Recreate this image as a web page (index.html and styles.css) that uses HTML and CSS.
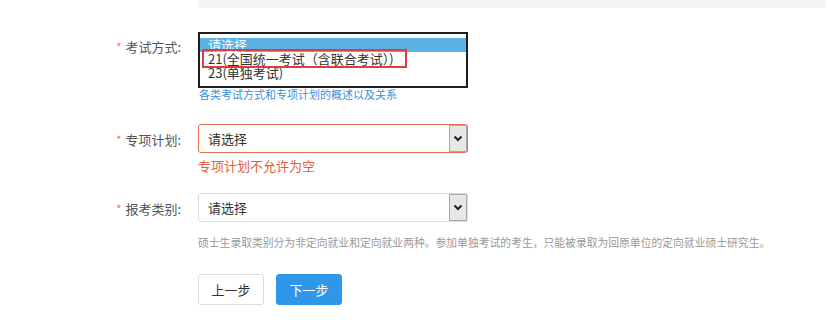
FILE: index.html
```html
<!DOCTYPE html>
<html lang="zh-CN">
<head>
    <meta charset="UTF-8">
    <title>报考信息</title>
    <link rel="stylesheet" href="styles.css">
</head>
<body>
<div class="topbar"></div>

<!-- 考试方式 -->
<div class="row row-mode">
    <div class="label"><span class="star">*</span>考试方式:</div>
    <div class="field">
        <div class="listbox">
            <div class="opt opt-on">请选择</div>
            <div class="opt">21(全国统一考试（含联合考试）)</div>
            <div class="opt">23(单独考试)</div>
            <div class="mark"></div>
        </div>
        <a class="link" href="#">各类考试方式和专项计划的概述以及关系</a>
    </div>
</div>

<!-- 专项计划 -->
<div class="row row-plan">
    <div class="label"><span class="star">*</span>专项计划:</div>
    <div class="field">
        <div class="select select-err">
            <span class="select-text">请选择</span>
            <span class="arrow">
                <svg width="10" height="7" viewBox="0 0 10 7"><path d="M1.5 1.5 L5 5 L8.5 1.5" fill="none" stroke="#222" stroke-width="2"/></svg>
            </span>
        </div>
        <div class="error">专项计划不允许为空</div>
    </div>
</div>

<!-- 报考类别 -->
<div class="row row-type">
    <div class="label"><span class="star">*</span>报考类别:</div>
    <div class="field">
        <div class="select">
            <span class="select-text">请选择</span>
            <span class="arrow">
                <svg width="10" height="7" viewBox="0 0 10 7"><path d="M1.5 1.5 L5 5 L8.5 1.5" fill="none" stroke="#222" stroke-width="2"/></svg>
            </span>
        </div>
        <div class="help">硕士生录取类别分为非定向就业和定向就业两种。参加单独考试的考生，只能被录取为回原单位的定向就业硕士研究生。</div>
    </div>
</div>

<div class="actions">
    <button class="btn">上一步</button>
    <button class="btn btn-primary">下一步</button>
</div>
</body>
</html>
```

FILE: styles.css
```css
body {
    margin: 0;
    background: #ffffff;
    font-family: "Microsoft YaHei", "Noto Sans CJK SC", sans-serif;
    color: #555;
}

.topbar {
    margin-left: 198px;
    width: 628px;
    height: 8px;
    background: #f5f5f5;
}

/* 表单行 */
.row {
    display: flex;
    align-items: flex-start;
}

.label {
    width: 198px;
    box-sizing: border-box;
    padding-right: 17px;
    text-align: right;
    font-size: 13px;
    line-height: 16px;
    color: #555;
}

.star {
    color: #f0704a;
    font-size: 11px;
    margin-right: 4px;
    position: relative;
    top: -1px;
}

.row-mode {
    margin-top: 24px;
}

.row-mode .label {
    padding-top: 7px;
}

.row-plan {
    margin-top: 24px;
}

.row-type {
    margin-top: 19px;
}

.row-plan .label,
.row-type .label {
    padding-top: 8px;
}

/* 展开的下拉列表 */
.listbox {
    position: relative;
    width: 270px;
    height: 56px;
    box-sizing: border-box;
    border: 2px solid #1e1e1e;
    padding-top: 4px;
    overflow: hidden;
    font-size: 13px;
}

.opt {
    height: 14px;
    line-height: 14px;
    padding-left: 8px;
    color: #333;
    white-space: nowrap;
}

.opt-on {
    background: #5bb1e3;
    color: #ffffff;
}

.mark {
    position: absolute;
    left: 2px;
    top: 15px;
    width: 205px;
    height: 19px;
    box-sizing: border-box;
    border: 2px solid #e23a3f;
}

.link {
    display: block;
    font-size: 11px;
    line-height: 12px;
    color: #3d8fd9;
    text-decoration: none;
    padding-left: 1px;
}

/* 普通下拉框 */
.select {
    display: flex;
    width: 270px;
    height: 29px;
    box-sizing: border-box;
    border: 1px solid #dcdcdc;
    border-radius: 3px;
    font-size: 13px;
    color: #333;
}

.select-err {
    border-color: #e0704f;
}

.select-text {
    flex: 1;
    padding-left: 9px;
    line-height: 27px;
}

.arrow {
    width: 18px;
    display: flex;
    align-items: center;
    justify-content: center;
    background: #e7e7e7;
    border: 1px solid #a9a9a9;
    box-sizing: border-box;
}

.error {
    margin-top: 5px;
    font-size: 13px;
    line-height: 16px;
    color: #e2603c;
}

.help {
    margin-top: 13px;
    font-size: 10.8px;
    line-height: 14px;
    color: #999;
    white-space: nowrap;
}

/* 按钮 */
.actions {
    display: flex;
    gap: 12px;
    margin-top: 25px;
    padding-left: 198px;
}

.btn {
    width: 66px;
    height: 31px;
    border: 1px solid #dddddd;
    border-radius: 3px;
    background: #ffffff;
    color: #333;
    font-family: "Microsoft YaHei", "Noto Sans CJK SC", sans-serif;
    font-size: 13px;
    padding: 0;
}

.btn-primary {
    background: #2f97e9;
    border-color: #2f97e9;
    color: #ffffff;
}
```
